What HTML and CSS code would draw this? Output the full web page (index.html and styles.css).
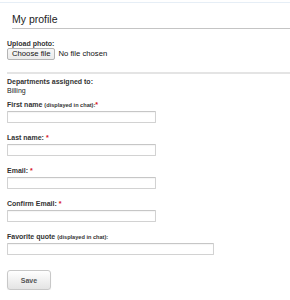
FILE: index.html
```html
<!DOCTYPE html>
<html>
<head>
<meta charset="utf-8">
<link rel="stylesheet" href="styles.css">
</head>
<body>
<div class="topline"></div>
<div class="page">
  <h1 class="title">My profile</h1>
  <div class="upload">
    <div class="lbl">Upload photo:</div>
    <div class="file">
      <label class="filebtn">Choose file<input class="file-input" type="file"></label>
      <span class="filename">No file chosen</span>
    </div>
  </div>
  <div class="sep"></div>
  <div class="dept">
    <div class="lbl dept-lbl">Departments assigned to:</div>
    <div class="dept-val">Billing</div>
  </div>
  <div class="field">
    <label class="lbl">First name <span class="small">(displayed in chat):</span><span class="req">*</span></label>
    <input class="inp" type="text">
  </div>
  <div class="field">
    <label class="lbl">Last name: <span class="req">*</span></label>
    <input class="inp" type="text">
  </div>
  <div class="field">
    <label class="lbl">Email: <span class="req">*</span></label>
    <input class="inp" type="text">
  </div>
  <div class="field">
    <label class="lbl">Confirm Email: <span class="req">*</span></label>
    <input class="inp" type="text">
  </div>
  <div class="field">
    <label class="lbl">Favorite quote <span class="small">(displayed in chat):</span></label>
    <input class="inp wide" type="text">
  </div>
  <button class="save" type="button">Save</button>
</div>
</body>
</html>
```

FILE: styles.css
```css
html, body {
  margin: 0;
  padding: 0;
  background: #ffffff;
  font-family: "Liberation Sans", Arial, Helvetica, sans-serif;
  color: #333;
}

.topline {
  margin-top: 2px;
  height: 1px;
  background: #e6eef6;
}

.page {
  padding-left: 7px;
  display: flex;
  flex-direction: column;
  align-items: flex-start;
}

.title {
  align-self: stretch;
  margin: 10px 0 0 5px;
  padding: 0 0 3px 0;
  font-size: 10.5px;
  line-height: 12px;
  font-weight: normal;
  color: #222;
  border-bottom: 1px solid #c4c4c4;
}

.lbl {
  display: block;
  font-size: 7px;
  line-height: 8px;
  font-weight: bold;
  color: #333;
}

.upload {
  margin-top: 11px;
  display: flex;
  flex-direction: column;
  align-items: flex-start;
}

.file {
  display: flex;
  align-items: center;
  gap: 3px;
  height: 12px;
  font-size: 7.7px;
  color: #111;
}

.filebtn {
  box-sizing: border-box;
  display: flex;
  align-items: center;
  height: 12px;
  padding: 0 4px;
  border: 1px solid #b4b4b4;
  border-radius: 2px;
  background: linear-gradient(#f7f7f7, #ebebeb);
  color: #111;
  line-height: 10px;
}

.file-input {
  display: none;
}

.filename {
  line-height: 12px;
}

.sep {
  align-self: stretch;
  margin-top: 12px;
  height: 2px;
  background: #e4e4e4;
}

.dept {
  margin-top: 3px;
  font-size: 7px;
  line-height: 9px;
}

.dept-lbl {
  line-height: 9px;
}

.dept-val {
  color: #222;
}

.field {
  margin-top: 11px;
  display: flex;
  flex-direction: column;
  align-items: flex-start;
}

.dept + .field {
  margin-top: 6px;
}

.small {
  font-size: 5.6px;
}

.req {
  color: #d8141b;
}

.inp {
  box-sizing: border-box;
  margin: 2px 0 0 0;
  width: 149px;
  height: 12px;
  padding: 0 2px;
  border: 1px solid #d2d2d2;
  border-top-color: #c6c6c6;
  border-radius: 1px;
  background: #fff;
  box-shadow: inset 0 1px 1px rgba(0, 0, 0, 0.04);
  outline: none;
}

.inp.wide {
  width: 207px;
}

.save {
  margin-top: 15px;
  box-sizing: border-box;
  width: 44px;
  height: 20px;
  padding: 0;
  border: 1px solid #c8c8c8;
  border-radius: 3px;
  background: linear-gradient(#ffffff, #e4e4e4);
  box-shadow: 0 1px 1px rgba(0, 0, 0, 0.08);
  font-family: "Liberation Sans", Arial, Helvetica, sans-serif;
  font-size: 7px;
  font-weight: bold;
  color: #555;
}
```
